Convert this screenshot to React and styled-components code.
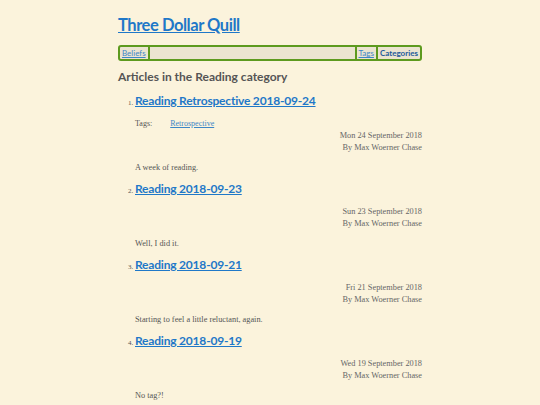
import styled, { createGlobalStyle } from 'styled-components';

const GlobalStyle = createGlobalStyle`
  html, body {
    margin: 0;
    padding: 0;
    background: #fbf3dc;
  }
  body {
    font-family: "Liberation Serif", serif;
    color: #555;
  }
`;

const sans = `"Lato", "Noto Sans", sans-serif`;

const Page = styled.div`
  width: 304px;
  margin: 0 auto;
  padding-top: 14px;
  min-height: 405px;
`;

const SiteTitle = styled.h1`
  margin: 0 0 9px;
  font-family: ${sans};
  font-size: 16.5px;
  font-weight: 700;
  letter-spacing: -0.45px;
  line-height: 22px;
  a {
    color: #1f78c8;
    text-decoration: underline;
  }
`;

const Nav = styled.nav`
  display: flex;
  align-items: stretch;
  height: 12px;
  border: 2px solid #5d9a1e;
  border-radius: 3px;
  background: #ebe4d0;
  font-family: ${sans};
  font-size: 8px;
  line-height: 12px;
`;

const NavLink = styled.a`
  padding: 0 2px;
  color: ${(p) => (p.$active ? '#1d5a99' : '#3d86c6')};
  font-weight: ${(p) => (p.$active ? 700 : 400)};
  text-decoration: ${(p) => (p.$active ? 'none' : 'underline')};
  border-left: ${(p) => (p.$edge === 'left' ? '2px solid #5d9a1e' : 'none')};
  border-right: ${(p) => (p.$edge === 'right' ? '2px solid #5d9a1e' : 'none')};
`;

const Spacer = styled.div`
  flex: 1;
`;

const Heading = styled.h2`
  margin: 8px 0 8px;
  font-family: ${sans};
  font-size: 12px;
  font-weight: 700;
  line-height: 16px;
  color: #555;
`;

const List = styled.ol`
  margin: 0;
  padding-left: 17px;
  font-size: 7px;
`;

const Item = styled.li`
  margin-bottom: 7px;
  &::marker {
    font-size: 7px;
    color: #555;
  }
`;

const ItemTitle = styled.h3`
  display: inline;
  font-family: ${sans};
  font-size: 12px;
  font-weight: 700;
  letter-spacing: -0.2px;
  line-height: 16px;
  a {
    color: #1f78c8;
    text-decoration: underline;
  }
`;

const TitleRow = styled.div`
  margin-bottom: 9px;
`;

const Tags = styled.div`
  display: flex;
  gap: 18px;
  font-size: 8px;
  line-height: 12px;
  a {
    color: #3d86c6;
    text-decoration: underline;
  }
`;

const Meta = styled.div`
  text-align: right;
  font-size: 8.3px;
  line-height: 12px;
  color: #666;
`;

const Summary = styled.p`
  margin: 8px 0 0;
  font-size: 8.3px;
  line-height: 12px;
  color: #555;
`;

const articles = [
  {
    title: 'Reading Retrospective 2018-09-24',
    tags: ['Retrospective'],
    date: 'Mon 24 September 2018',
    summary: 'A week of reading.',
  },
  { title: 'Reading 2018-09-23', date: 'Sun 23 September 2018', summary: 'Well, I did it.' },
  {
    title: 'Reading 2018-09-21',
    date: 'Fri 21 September 2018',
    summary: 'Starting to feel a little reluctant, again.',
  },
  { title: 'Reading 2018-09-19', date: 'Wed 19 September 2018', summary: 'No tag?!' },
];

export default function App() {
  return (
    <>
      <GlobalStyle />
      <Page>
        <SiteTitle>
          <a href="#">Three Dollar Quill</a>
        </SiteTitle>
        <Nav>
          <NavLink href="#" $edge="right">Beliefs</NavLink>
          <Spacer />
          <NavLink href="#" $edge="left">Tags</NavLink>
          <NavLink href="#" $edge="left" $active>Categories</NavLink>
        </Nav>
        <Heading>Articles in the Reading category</Heading>
        <List>
          {articles.map((a) => (
            <Item key={a.title}>
              <TitleRow>
                <ItemTitle>
                  <a href="#">{a.title}</a>
                </ItemTitle>
              </TitleRow>
              {a.tags && (
                <Tags>
                  <span>Tags:</span>
                  {a.tags.map((t) => (
                    <a href="#" key={t}>{t}</a>
                  ))}
                </Tags>
              )}
              <Meta>
                <div>{a.date}</div>
                <div>By Max Woerner Chase</div>
              </Meta>
              <Summary>{a.summary}</Summary>
            </Item>
          ))}
        </List>
      </Page>
    </>
  );
}
